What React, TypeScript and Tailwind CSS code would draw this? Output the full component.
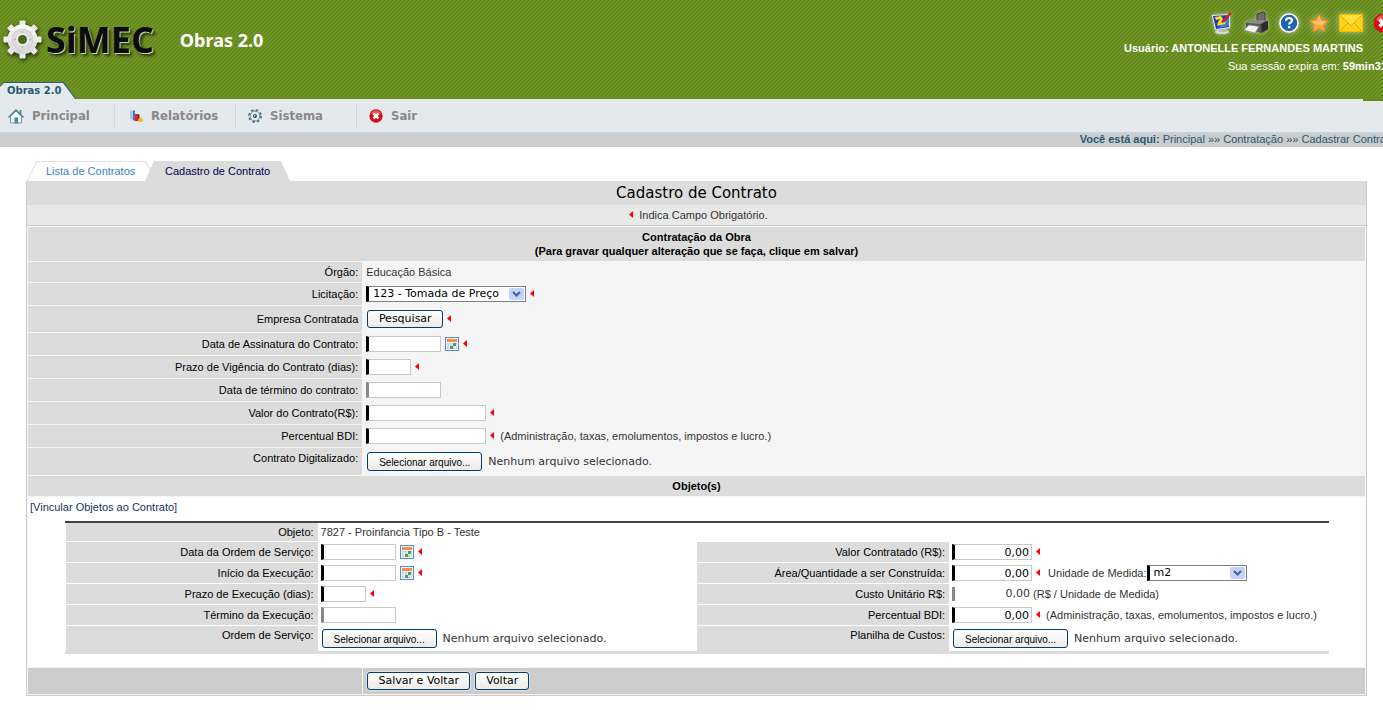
import { useState, type ReactNode } from "react";

const VERDANA = "font-['DejaVu_Sans',Verdana,sans-serif]";

function Gear() {
  return (
    <svg viewBox="0 0 40 42" className="h-[42px] w-10 shrink-0 drop-shadow-[1px_2px_2px_rgba(0,0,0,0.7)]" aria-hidden="true">
      <defs>
        <linearGradient id="gear" x1="0" y1="0" x2="0" y2="1">
          <stop offset="0" stopColor="#fafafa" />
          <stop offset="1" stopColor="#d6d6d6" />
        </linearGradient>
      </defs>
      {[0, 45, 90, 135].map((a) => (
        <rect key={a} x="17.500" y="1.500" width="6" height="38" rx="1" fill="#ececec" transform={`rotate(${a} 20.5 20.5)`} />
      ))}
      <circle cx="20.5" cy="20.5" r="15" fill="url(#gear)" />
      <circle cx="20.5" cy="20.5" r="10.500" fill="#dcdcdc" stroke="#d0d0d0" />
      <circle cx="20.5" cy="20.5" r="6.500" fill="#ececec" />
      {[0, 90, 180, 270].map((a) => (
        <circle key={a} cx="20.5" cy="13" r="1" fill="#b5b5b5" transform={`rotate(${a} 20.5 20.5)`} />
      ))}
      <circle cx="20.5" cy="20.5" r="4.500" fill="#4a6717" />
    </svg>
  );
}

function MonitorIcon() {
  return (
    <svg viewBox="0 0 22 24" className="h-6 w-[22px]" aria-hidden="true">
      <ellipse cx="11" cy="21" rx="7" ry="2" fill="#d9d9d9" />
      <path d="M8 17h7l1 4H8z" fill="#b9b9b9" />
      <path d="M1 4l18-1 0 14-15 2z" fill="#e7e7ee" />
      <path d="M2 5l16-1 0 12-13 2z" fill="#1b3fc4" />
      <path d="M18 6v9l-11 2z" fill="#3f7be0" />
      <path d="M4 6l6-1 2 3-2 3 5-1-1 3-8 2 1-4 2-3-4 1z" fill="#ffd914" />
      <path d="M19 1L12 9l-1 3 3-1 7-9z" fill="#d3201b" />
    </svg>
  );
}

function PrinterIcon() {
  return (
    <svg viewBox="0 0 26 24" className="h-6 w-[26px]" aria-hidden="true">
      <path d="M14 3l6-2 2 1v9l-8 1z" fill="#6c6c6c" stroke="#3c3c3c" />
      <path d="M3 12l6-3 14 0 2 2v7l-7 4-15-5z" fill="#585858" />
      <path d="M3 12l6-3 14 0-5 4z" fill="#8a8a8a" />
      <path d="M18 13l7-3v8l-6 4z" fill="#2c2c2c" />
      <path d="M6 14l10 1.500-4 6.500-11-3z" fill="#f2f2f2" stroke="#8b8b8b" strokeWidth=".6" />
    </svg>
  );
}

function HelpIcon() {
  return (
    <svg viewBox="0 0 20 20" className="size-5" aria-hidden="true">
      <circle cx="10" cy="10" r="9" fill="#1f62ad" stroke="#fff" strokeWidth="1.6" />
      <path d="M7 7.8C7 5.900 8.300 5 10 5s3 1 3 2.600c0 2-2.900 2.200-2.900 4" fill="none" stroke="#fff" strokeWidth="2.200" />
      <rect x="9" y="13" width="2.300" height="2.300" fill="#fff" />
    </svg>
  );
}

function StarIcon() {
  return (
    <svg viewBox="0 0 20 20" className="size-5" aria-hidden="true">
      <path d="M10 1l2.800 6 6.700.7-5 4.500 1.500 6.600-6-3.500-6 3.500 1.500-6.600-5-4.500L7.200 7z" fill="#fda63a" stroke="#f18a1c" />
      <path d="M10 3l2 5 5 .5-4 3H7l-4-3L8 8z" fill="#ffc36e" />
    </svg>
  );
}

function MailIcon() {
  return (
    <svg viewBox="0 0 24 18" className="h-[18px] w-6" aria-hidden="true">
      <rect x=".5" y=".5" width="23" height="17" fill="#ffd21a" stroke="#f6b900" />
      <path d="M1 1l11 10L23 1z" fill="#ffe03c" />
      <path d="M1 1l11 11L23 1M1 17l8-8M23 17l-8-8" fill="none" stroke="#eda600" />
    </svg>
  );
}

function CloseIcon({ className }: { className: string }) {
  return (
    <svg viewBox="0 0 20 20" className={className} aria-hidden="true">
      <circle cx="10" cy="10" r="9.500" fill="#d0131b" />
      <path d="M3 7a7.500 7.500 0 0 1 14 0q-7 3-14 0z" fill="#ee5b56" />
      <path d="M6.500 6.500l7 7M13.500 6.500l-7 7" stroke="#fff" strokeWidth="3.400" />
    </svg>
  );
}

function HomeIcon() {
  return (
    <svg viewBox="0 0 16 15" className="h-[15px] w-4" aria-hidden="true">
      <path d="M11.500 1h2v4h-2z" fill="#5b93a0" />
      <path d="M2.500 7v7h11V7L8 2z" fill="#f3f8fa" stroke="#6a9fab" />
      <path d="M.5 8.500L8 1l7.500 7.500" fill="none" stroke="#3c7f90" strokeWidth="1.300" />
      <path d="M6.500 8.500h3.500v6H6.500z" fill="#4a8b9b" />
    </svg>
  );
}

function ChartIcon() {
  return (
    <svg viewBox="0 0 14 14" className="size-3.5" aria-hidden="true">
      <path d="M1 2l3-1v10l-3-1z" fill="#a9c6f0" />
      <path d="M4 1l2 1v10l-2-1z" fill="#4875c4" />
      <path d="M6 5h4v7H6z" fill="#e0202a" />
      <path d="M9 5l1.500 1v6H9z" fill="#a40e18" />
      <ellipse cx="11.500" cy="11" rx="2.500" ry="2" fill="#fbb51d" />
    </svg>
  );
}

function CogIcon() {
  return (
    <svg viewBox="0 0 14 14" className="size-3.5" aria-hidden="true">
      <circle cx="7" cy="7" r="6" fill="none" stroke="#44707c" strokeWidth="1.800" strokeDasharray="2.400 2.312" />
      <circle cx="7" cy="7" r="4.900" fill="#e6f0f3" stroke="#5f8894" />
      <circle cx="7" cy="7" r="2" fill="#2c4d57" />
      <circle cx="6.800" cy="6.800" r=".7" fill="#fff" />
    </svg>
  );
}

function CalendarButton({ label }: { label: string }) {
  return (
    <button type="button" aria-label={label} className="ml-1 shrink-0">
      <svg viewBox="0 0 14 14" className="size-3.5" aria-hidden="true">
        <rect x=".5" y=".5" width="13" height="13" fill="#eef4fd" stroke="#5a8cd2" />
        <rect x="2" y="2" width="10" height="3" fill="#f98f43" />
        <path d="M2 6h10v6H2z" fill="#b9cdea" />
        <path d="M2 8h10M2 10h10M4.500 6v6M7.500 6v6M10.500 6v6" stroke="#fff" strokeWidth=".7" />
        <path d="M8 6h3v3H8zM5 9h3v3H5z" fill="#4d9f4c" />
      </svg>
    </button>
  );
}

function Required() {
  return (
    <svg viewBox="0 0 4 7" className="mb-0.5 ml-1 h-[7px] w-1 shrink-0" role="img" aria-label="Obrigatório">
      <path d="M4 0v7L0 3.500z" fill="#f00" />
    </svg>
  );
}

interface FieldProps { id: string; width: string; value?: string; disabled?: boolean }

function Field({ id, width, value = "", disabled }: FieldProps) {
  const [text, setText] = useState(value);
  return (
    <input
      id={id}
      type="text"
      value={text}
      onChange={(e) => setText(e.target.value)}
      disabled={disabled}
      className={`h-4 border border-l-3 border-[#c8c8c8] bg-white px-0.5 text-[11px] text-black ${VERDANA} ${width} ${
        disabled ? "border-l-[#888]" : "border-l-black"
      } ${value ? "text-right" : ""}`}
    />
  );
}

function Select({ id, width, options }: { id: string; width: string; options: string[] }) {
  return (
    <span className={`relative block shrink-0 ${width}`}>
      <select
        id={id}
        className={`block h-4 w-full appearance-none border border-l-3 border-[#7f7f7f] border-l-black bg-white pl-1 text-[11px] leading-[14px] text-black ${VERDANA}`}
      >
        {options.map((o) => <option key={o}>{o}</option>)}
      </select>
      <span className="pointer-events-none absolute top-0.5 right-0.5 flex h-3 w-[15px] items-center justify-center rounded-xs bg-[#c3d3fd]">
        <svg viewBox="0 0 9 6" className="h-1.5 w-[9px]" aria-hidden="true">
          <path d="M1 1l3.500 3.500L8 1" fill="none" stroke="#4d6185" strokeWidth="2" />
        </svg>
      </span>
    </span>
  );
}

function XpButton({ id, children, className }: { id?: string; children: ReactNode; className: string }) {
  return (
    <button
      id={id}
      type="button"
      className={`shrink-0 rounded-[3px] border border-[#003c74] bg-linear-to-b from-white to-[#ecebe5] text-center whitespace-nowrap text-black shadow-[0_0_0_1px_rgba(255,255,255,0.4)] ${className}`}
    >
      {children}
    </button>
  );
}

function FilePicker({ id }: { id: string }) {
  return (
    <>
      <XpButton id={id} className="ml-px h-[19px] w-[115px] pt-0.5 text-[10px] leading-[14px]">Selecionar arquivo...</XpButton>
      <span className={`ml-1.5 text-[11px] whitespace-nowrap ${VERDANA}`}>Nenhum arquivo selecionado.</span>
    </>
  );
}

function Row({ label, htmlFor, height, top, children }: {
  label: string; htmlFor?: string; height: string; top?: boolean; children: ReactNode;
}) {
  return (
    <div className={`grid grid-cols-[25%_1fr] gap-px ${height}`}>
      <label
        htmlFor={htmlFor}
        className={`flex justify-end bg-[#dcdcdc] pr-1 text-black ${top ? "items-start pt-[3px]" : "items-center"}`}
      >
        {label}
      </label>
      <div className="flex items-center pl-[3px]">{children}</div>
    </div>
  );
}

function ObjLabel({ htmlFor, top, children }: { htmlFor?: string; top?: boolean; children: ReactNode }) {
  return (
    <label
      htmlFor={htmlFor}
      className={`mr-px flex justify-end bg-[#dcdcdc] pr-1 text-black ${top ? "items-start pt-0.5" : "items-center"}`}
    >
      {children}
    </label>
  );
}

function ObjRow({ height, children }: { height: string; children: ReactNode }) {
  return <div className={`grid grid-cols-[20%_30%_20%_1fr] ${height}`}>{children}</div>;
}

const cell = "flex items-center pl-0.5 whitespace-nowrap";

const menu = [
  { text: "Principal", icon: <HomeIcon />, width: "w-[115px]" },
  { text: "Relatórios", icon: <ChartIcon />, width: "w-[121px] pl-3.5" },
  { text: "Sistema", icon: <CogIcon />, width: "w-[121px] pl-3" },
  { text: "Sair", icon: <CloseIcon className="size-3.5" />, width: "w-[121px] pl-3 border-r-0" },
];

function Header() {
  return (
    <header className="flex h-[99px] justify-between overflow-hidden bg-[#6c9022] bg-[linear-gradient(135deg,#5b7d1d_12.5%,#6f9423_12.5%,#6f9423_50%,#5b7d1d_50%,#5b7d1d_62.5%,#6f9423_62.5%)] bg-[size:4px_4px]">
      <div className="flex flex-col justify-between">
        <div className="flex items-center pt-[19px] pl-0.5">
          <Gear />
          <span className="ml-1 font-['Open_Sans',sans-serif] text-[36px] leading-[42px] font-bold text-[#0c0c0c] [text-shadow:1px_1px_0_#c9d2b4,3px_3px_3px_rgba(0,0,0,0.6)]">
            SiMEC
          </span>
          <h1 className="ml-[26px] font-['Noto_Sans',Tahoma,sans-serif] text-[18px] leading-6 font-bold text-white">Obras 2.0</h1>
        </div>
        <div className="h-[17px] w-[76px] bg-[#2f5f7c] pt-px pr-px [clip-path:polygon(0_4px,4px_0,64px_0,100%_100%,0_100%)]">
          <a
            href="#obras"
            className={`block h-4 bg-[#e4e9ec] pl-[7px] text-[10px] leading-4 font-bold text-[#255a75] [clip-path:polygon(0_4px,4px_0,63px_0,100%_100%,0_100%)] ${VERDANA}`}
          >
            Obras 2.0
          </a>
        </div>
      </div>
      <div className="-mr-2.5 flex flex-col items-end text-[11px] whitespace-nowrap text-white">
        <div className="flex h-10 items-center gap-2.5 pt-1.5">
          <button type="button" aria-label="Mudar de sistema" className="drop-shadow-[0_0_2px_#fff8]"><MonitorIcon /></button>
          <button type="button" aria-label="Imprimir" className="drop-shadow-[0_0_2px_#fff8]"><PrinterIcon /></button>
          <button type="button" aria-label="Ajuda" className="drop-shadow-[0_0_3px_#fff8]"><HelpIcon /></button>
          <button type="button" aria-label="Favoritos" className="drop-shadow-[0_0_3px_#fff8]"><StarIcon /></button>
          <button type="button" aria-label="Mensagens" className="drop-shadow-[0_0_3px_#fff8]"><MailIcon /></button>
          <button type="button" aria-label="Fechar"><CloseIcon className="size-5" /></button>
        </div>
        <div className="mr-[30px] leading-4 font-bold">Usuário: ANTONELLE FERNANDES MARTINS</div>
        <div className="mt-0.5 leading-4">Sua sessão expira em: <b>59min31s</b></div>
      </div>
    </header>
  );
}

function Menu() {
  return (
    <nav className="border-b-2 border-[#c8d3da] bg-[#e4e9ec]">
      <div className="flex h-0.5 justify-end"><div className="w-5 bg-[#658720]" /></div>
      <ul className="flex h-[31px] pt-[3px]">
        {menu.map((m) => (
          <li key={m.text} className={`h-6 border-r border-[#cbd7de] pl-2 ${m.width}`}>
            <a href="#menu" className="flex h-6 items-center gap-2 text-[13px] font-bold text-[#888] font-['DejaVu_Sans_Condensed','DejaVu_Sans',sans-serif]">
              {m.icon}
              {m.text}
            </a>
          </li>
        ))}
      </ul>
    </nav>
  );
}

function Tabs() {
  return (
    <div className="ml-[27px] flex h-5 text-[11px] leading-5">
      <div className="w-[124px] bg-[#e2e2e2] px-px pt-px [clip-path:polygon(0_100%,9px_0,119px_0,100%_8px,100%_100%)]">
        <a href="#lista" className="block h-[19px] bg-white pl-[18px] leading-[19px] text-[#3d84c4] [clip-path:polygon(0_100%,9px_0,117px_0,100%_8px,100%_100%)]">
          Lista de Contratos
        </a>
      </div>
      <a href="#cadastro" className="-ml-1.5 block w-[145px] bg-[#dcdcdc] pl-5 text-[#000050] [clip-path:polygon(0_100%,9px_0,136px_0,100%_100%)]">
        Cadastro de Contrato
      </a>
    </div>
  );
}

function Objeto() {
  return (
    <section className="mt-[7px] mr-9 ml-[37px] border-t-2 border-b-3 border-t-[#444] border-b-[#dcdcdc]">
      <div className="ml-px grid gap-px">
        <ObjRow height="h-[18px]">
          <ObjLabel>Objeto:</ObjLabel>
          <div className={cell}>7827 - Proinfancia Tipo B - Teste</div>
        </ObjRow>
        <ObjRow height="h-5">
          <ObjLabel htmlFor="dataOs">Data da Ordem de Serviço:</ObjLabel>
          <div className={cell}><Field id="dataOs" width="w-[75px]" /><CalendarButton label="Data da ordem" /><Required /></div>
          <ObjLabel htmlFor="valorObj">Valor Contratado (R$):</ObjLabel>
          <div className={cell}><Field id="valorObj" width="w-20" value="0,00" /><Required /></div>
        </ObjRow>
        <ObjRow height="h-5">
          <ObjLabel htmlFor="inicio">Início da Execução:</ObjLabel>
          <div className={cell}><Field id="inicio" width="w-[75px]" /><CalendarButton label="Data de início" /><Required /></div>
          <ObjLabel htmlFor="area">Área/Quantidade a ser Construída:</ObjLabel>
          <div className={cell}>
            <Field id="area" width="w-20" value="0,00" />
            <Required />
            <label htmlFor="unidade" className="ml-2">Unidade de Medida:</label>
            <Select id="unidade" width="w-[100px]" options={["m2"]} />
          </div>
        </ObjRow>
        <ObjRow height="h-5">
          <ObjLabel htmlFor="prazoExec">Prazo de Execução (dias):</ObjLabel>
          <div className={cell}><Field id="prazoExec" width="w-[45px]" /><Required /></div>
          <ObjLabel htmlFor="custo">Custo Unitário R$:</ObjLabel>
          <div className={cell}>
            <input
              id="custo"
              readOnly
              value="0,00"
              className={`mr-[3px] h-3.5 w-[78px] border-l-3 border-[#888] text-right text-[11px] ${VERDANA}`}
            />
            (R$ / Unidade de Medida)
          </div>
        </ObjRow>
        <ObjRow height="h-5">
          <ObjLabel htmlFor="termino">Término da Execução:</ObjLabel>
          <div className={cell}><Field id="termino" width="w-[75px]" disabled /></div>
          <ObjLabel htmlFor="bdiObj">Percentual BDI:</ObjLabel>
          <div className={cell}>
            <Field id="bdiObj" width="w-20" value="0,00" />
            <Required />
            <span className="ml-1.5">(Administração, taxas, emolumentos, impostos e lucro.)</span>
          </div>
        </ObjRow>
        <ObjRow height="h-[25px]">
          <ObjLabel htmlFor="arquivoOs" top>Ordem de Serviço:</ObjLabel>
          <div className={cell}><FilePicker id="arquivoOs" /></div>
          <ObjLabel htmlFor="planilha" top>Planilha de Custos:</ObjLabel>
          <div className={cell}><FilePicker id="planilha" /></div>
        </ObjRow>
      </div>
    </section>
  );
}

export default function App() {
  return (
    <div className="overflow-hidden bg-white font-['Liberation_Sans',Arial,sans-serif] text-[11px] leading-[14px] text-[#333]">
      <Header />
      <Menu />
      <div className="flex h-[13px] justify-end bg-[#ccc] leading-[11px] text-[#255a75]">
        <div className="-mr-3 whitespace-nowrap">
          <b>Você está aqui:</b> Principal »» Contratação »» Cadastrar Contrato
        </div>
      </div>

      <main className="mb-3.5 pt-3.5">
        <Tabs />
        <form className="mr-4 ml-[26px] border border-t-0 border-[#ccc]">
          <h2 className={`h-6 bg-[#dcdcdc] text-center text-[15px] leading-6 text-black ${VERDANA}`}>
            Cadastro de Contrato
          </h2>
          <div className="flex h-[21px] items-center justify-center border-b border-[#ccc] bg-[#e8e8e8]">
            <Required />
            <span className="ml-1.5">Indica Campo Obrigatório.</span>
          </div>

          <div className="grid gap-px bg-[#f5f5f5] p-px">
            <h3 className="bg-[#dcdcdc] py-[3px] text-center font-bold text-black">
              Contratação da Obra
              <br />
              (Para gravar qualquer alteração que se faça, clique em salvar)
            </h3>
            <Row label="Órgão:" height="h-5">Educação Básica</Row>
            <Row label="Licitação:" htmlFor="licitacao" height="h-[22px]">
              <Select id="licitacao" width="w-40" options={["123 - Tomada de Preço"]} />
              <Required />
            </Row>
            <Row label="Empresa Contratada" htmlFor="empresa" height="h-[26px]">
              <XpButton id="empresa" className={`ml-px h-[18px] w-[76px] text-[11px] ${VERDANA}`}>Pesquisar</XpButton>
              <Required />
            </Row>
            <Row label="Data de Assinatura do Contrato:" htmlFor="assinatura" height="h-[22px]">
              <Field id="assinatura" width="w-[75px]" />
              <CalendarButton label="Data de assinatura" />
              <Required />
            </Row>
            <Row label="Prazo de Vigência do Contrato (dias):" htmlFor="prazo" height="h-[22px]">
              <Field id="prazo" width="w-[45px]" />
              <Required />
            </Row>
            <Row label="Data de término do contrato:" htmlFor="dataTermino" height="h-[22px]">
              <Field id="dataTermino" width="w-[75px]" disabled />
            </Row>
            <Row label="Valor do Contrato(R$):" htmlFor="valor" height="h-[22px]">
              <Field id="valor" width="w-[120px]" />
              <Required />
            </Row>
            <Row label="Percentual BDI:" htmlFor="bdi" height="h-[22px]">
              <Field id="bdi" width="w-[120px]" />
              <Required />
              <span className="ml-1.5">(Administração, taxas, emolumentos, impostos e lucro.)</span>
            </Row>
            <Row label="Contrato Digitalizado:" htmlFor="arquivo" height="h-[27px]" top>
              <FilePicker id="arquivo" />
            </Row>
            <h3 className="h-5 bg-[#dcdcdc] text-center leading-5 font-bold text-black">Objeto(s)</h3>
            <div className="bg-white pt-[3px] pb-[13px]">
              <a href="#vincular" className="ml-0.5 text-[#133368]">[Vincular Objetos ao Contrato]</a>
              <Objeto />
            </div>
            <div className="grid h-[26px] grid-cols-[25%_1fr] gap-px">
              <div className="bg-[#ccc]" />
              <div className="flex items-center gap-[5px] bg-[#ccc] pl-1">
                <XpButton className={`h-[18px] w-[103px] text-[11px] ${VERDANA}`}>Salvar e Voltar</XpButton>
                <XpButton className={`h-[18px] w-[54px] text-[11px] ${VERDANA}`}>Voltar</XpButton>
              </div>
            </div>
          </div>
        </form>
      </main>
    </div>
  );
}
